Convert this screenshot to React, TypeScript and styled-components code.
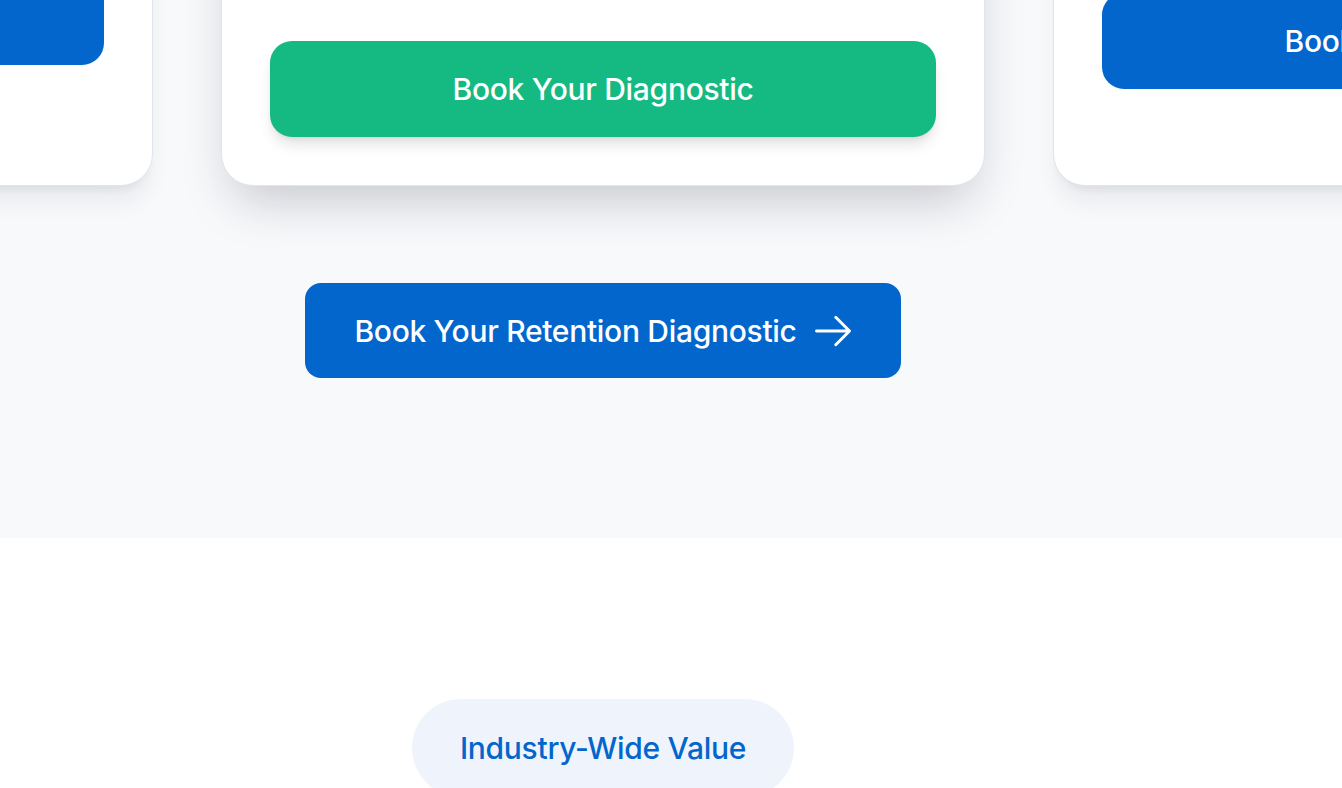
import styled, { createGlobalStyle } from 'styled-components';

const GlobalStyle = createGlobalStyle`
  body {
    margin: 0;
    background: #ffffff;
    font-family: Inter, 'Noto Sans', 'Liberation Sans', sans-serif;
    -webkit-font-smoothing: antialiased;
  }
`;

const Page = styled.div`
  width: 1342px;
  height: 788px;
  overflow: hidden;
  background: #ffffff;
`;

const Column = styled.div`
  width: 1206px;
  display: flex;
  flex-direction: column;
  align-items: center;
`;

const PlansSection = styled.section`
  background: #f8f9fb;
  padding-bottom: 160px;
`;

const CardTrack = styled.div`
  display: flex;
  justify-content: center;
  align-items: stretch;
  gap: 68px;
  margin-top: -234px;
  width: 1206px;
`;

const Card = styled.div<{ $featured?: boolean }>`
  flex: 0 0 764px;
  height: 420px;
  box-sizing: border-box;
  display: flex;
  flex-direction: column;
  padding: 48px;
  background: #ffffff;
  border: 1px solid #dfe5ee;
  border-radius: 32px;
  box-shadow: ${({ $featured }) =>
    $featured
      ? '0 25px 50px -12px rgba(15, 23, 42, 0.22)'
      : '0 20px 25px -5px rgba(15, 23, 42, 0.07), 0 8px 10px -6px rgba(15, 23, 42, 0.07)'};
`;

const CardBody = styled.div<{ $height?: number }>`
  ${({ $height }) => ($height !== undefined ? `height: ${$height}px;` : 'flex: 1;')}
`;

const PlanButton = styled.button<{ $tone: 'blue' | 'green' }>`
  height: 96px;
  width: 100%;
  flex-shrink: 0;
  border: none;
  border-radius: 22px;
  font-family: inherit;
  font-size: 30px;
  font-weight: 500;
  letter-spacing: -0.3px;
  color: #ffffff;
  cursor: pointer;
  background: ${({ $tone }) => ($tone === 'green' ? '#14ba82' : '#0266cc')};
  box-shadow: ${({ $tone }) =>
    $tone === 'green'
      ? '0 10px 15px -3px rgba(0, 0, 0, 0.12), 0 4px 6px -4px rgba(0, 0, 0, 0.1)'
      : 'none'};
`;

const CtaButton = styled.button`
  margin-top: 97px;
  height: 95px;
  display: inline-flex;
  align-items: center;
  gap: 14px;
  padding: 0 46px 0 49px;
  border: none;
  border-radius: 16px;
  background: #0266cc;
  color: #ffffff;
  font-family: inherit;
  font-size: 30px;
  font-weight: 500;
  letter-spacing: -0.3px;
  cursor: pointer;

  svg {
    width: 44px;
    height: 44px;
  }
`;

const ValueSection = styled.section`
  padding-top: 161px;
`;

const Pill = styled.span`
  display: inline-flex;
  align-items: center;
  height: 98px;
  padding: 0 48px;
  border-radius: 999px;
  background: #eff4fc;
  color: #0266cc;
  font-size: 30px;
  font-weight: 500;
  letter-spacing: -0.3px;
`;

const ArrowRight = () => (
  <svg viewBox="0 0 24 24" fill="none" stroke="currentColor" strokeWidth={1.6} strokeLinecap="round" strokeLinejoin="round">
    <path d="M13.5 4.5 21 12m0 0-7.5 7.5M21 12H3" />
  </svg>
);

export default function App() {
  return (
    <Page>
      <GlobalStyle />
      <PlansSection>
        <Column>
          <CardTrack>
            <Card>
              <CardBody $height={154} />
              <PlanButton $tone="blue">Book Your Diagnostic</PlanButton>
            </Card>
            <Card $featured>
              <CardBody />
              <PlanButton $tone="green">Book Your Diagnostic</PlanButton>
            </Card>
            <Card>
              <CardBody $height={178} />
              <PlanButton $tone="blue">Book Your Diagnostic</PlanButton>
            </Card>
          </CardTrack>
          <CtaButton>
            Book Your Retention Diagnostic
            <ArrowRight />
          </CtaButton>
        </Column>
      </PlansSection>
      <ValueSection>
        <Column>
          <Pill>Industry-Wide Value</Pill>
        </Column>
      </ValueSection>
    </Page>
  );
}
